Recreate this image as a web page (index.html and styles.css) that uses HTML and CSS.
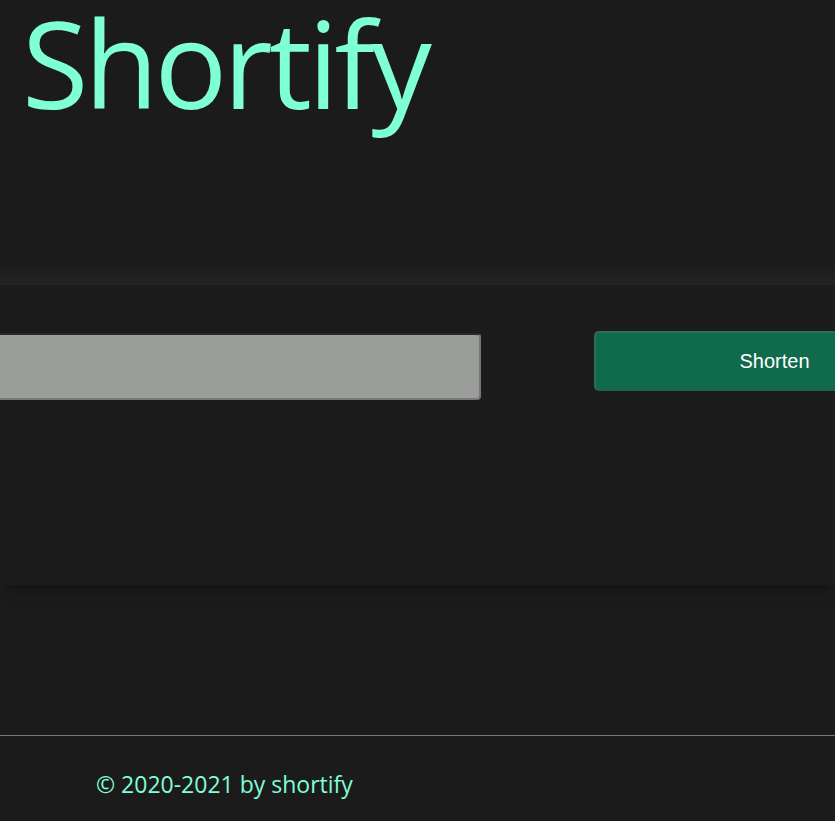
FILE: index.html
```html
<!DOCTYPE html>
<html lang="en">
<head>
<meta charset="utf-8">
<title>Shortify</title>
<link rel="stylesheet" href="styles.css">
</head>
<body>
<header class="header">
  <h1 class="brand">Shortify</h1>
</header>
<main class="main">
  <form class="shorten-form">
    <input class="url-input" type="text" aria-label="URL">
    <button class="shorten-btn" type="button">Shorten</button>
  </form>
</main>
<footer class="footer">
  <p class="copyright">© 2020-2021 by shortify</p>
</footer>
</body>
</html>
```
FILE: styles.css
```css
html, body {
  margin: 0;
  padding: 0;
  background: #1b1b1b;
  overflow: hidden;
}
body {
  width: 835px;
  height: 821px;
  font-family: "Open Sans", "Noto Sans", sans-serif;
}
.header {
  box-sizing: border-box;
  height: 285px;
  background-image: linear-gradient(#1b1b1b 0, #1b1b1b 265px, #252323 285px);
}
.brand {
  margin: 0;
  padding: 0 0 0 22px;
  font-family: "Open Sans", sans-serif;
  font-weight: 400;
  font-size: 121px;
  line-height: 124px;
  color: #7fffd4;
  letter-spacing: -4px;
}
.main {
  height: 300px;
  background: #1c1c1c;
  box-shadow: 0 12px 10px -6px #151515;
}
.shorten-form {
  display: flex;
  align-items: flex-start;
  padding-top: 46px;
  margin-left: -40px;
  gap: 113px;
}
.url-input {
  box-sizing: border-box;
  flex: 0 0 521px;
  height: 67px;
  margin: 2px 0 0;
  background: #9b9d9b;
  border: 2px solid #777;
  border-top-color: #2a2a2a;
  border-left-color: #2a2a2a;
  border-radius: 4px;
  padding: 0 10px;
}
.shorten-btn {
  box-sizing: border-box;
  flex: 0 0 361px;
  height: 60px;
  background: #106a4c;
  color: #fff;
  border: 2px solid #245f48;
  border-top-color: #2e6d55;
  border-left-color: #2e6d55;
  border-radius: 5px;
  font-family: "Liberation Sans", Arial, sans-serif;
  font-size: 20px;
}
.footer {
  margin-top: 150px;
  border-top: 1px solid #777;
  height: 85px;
}
.copyright {
  margin: 0;
  padding: 32px 0 0 96px;
  font-family: "Open Sans", sans-serif;
  font-size: 23px;
  line-height: 32px;
  color: #7fffd4;
}
```
